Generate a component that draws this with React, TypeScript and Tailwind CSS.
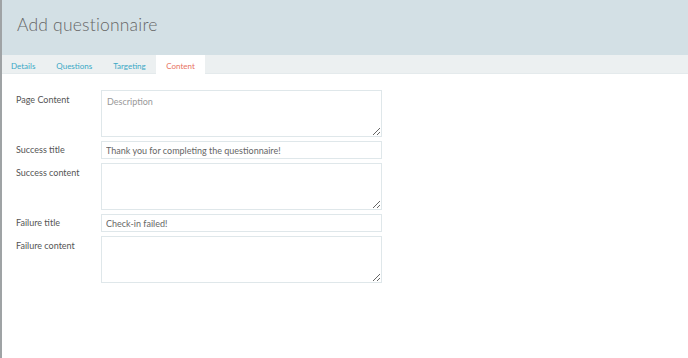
import React from "react";

const font = { fontFamily: "Lato, 'Open Sans', sans-serif" };

function Row({ label, children, tall }: { label: string; children: React.ReactNode; tall?: boolean }) {
  return (
    <div className={`flex ${tall ? "items-start" : "items-center"}`}>
      <div className={`w-[85px] shrink-0 text-[9px] text-[#555] ${tall ? "pt-[3px]" : ""}`}>{label}</div>
      <div className="w-[281px]">{children}</div>
    </div>
  );
}

export default function App() {
  const ta =
    "block w-full h-[47px] border border-[#dfe7ea] bg-white px-[5px] py-[4px] text-[9px] text-[#666] placeholder:text-[#999] outline-none resize-y";
  const inp =
    "block w-full h-[18px] border border-[#dfe7ea] bg-white px-[4px] text-[9px] text-[#666] outline-none";
  return (
    <div style={font} className="w-[688px] h-[358px] bg-white border-l-2 border-[#9fa3a5] overflow-hidden">
      <div className="h-[55px] bg-[#d3e0e5] flex items-center pl-[15px]">
        <h1 className="text-[17.5px] font-light text-[#666] tracking-[0.2px] pb-[5px]">Add questionnaire</h1>
      </div>
      <div className="h-[19px] bg-[#ecf0f1] border-b border-[#e4eaec] flex items-stretch text-[8px] text-[#3aa8c5]">
        <div className="pl-[9px] pr-[10.5px] pt-[3px] flex items-center">Details</div>
        <div className="px-[10.5px] pt-[3px] flex items-center">Questions</div>
        <div className="px-[10.5px] pt-[3px] flex items-center">Targeting</div>
        <div className="px-[10px] pt-[3px] flex items-center bg-white text-[#e8735f] -mb-px">Content</div>
      </div>
      <div className="pl-[14px] pt-[16px] flex flex-col gap-[4px]">
        <Row label="Page Content" tall>
          <textarea className={ta} placeholder="Description" />
        </Row>
        <Row label="Success title">
          <input className={inp} defaultValue="Thank you for completing the questionnaire!" />
        </Row>
        <Row label="Success content" tall>
          <textarea className={ta} />
        </Row>
        <Row label="Failure title">
          <input className={inp} defaultValue="Check-in failed!" />
        </Row>
        <Row label="Failure content" tall>
          <textarea className={ta} />
        </Row>
      </div>
    </div>
  );
}
